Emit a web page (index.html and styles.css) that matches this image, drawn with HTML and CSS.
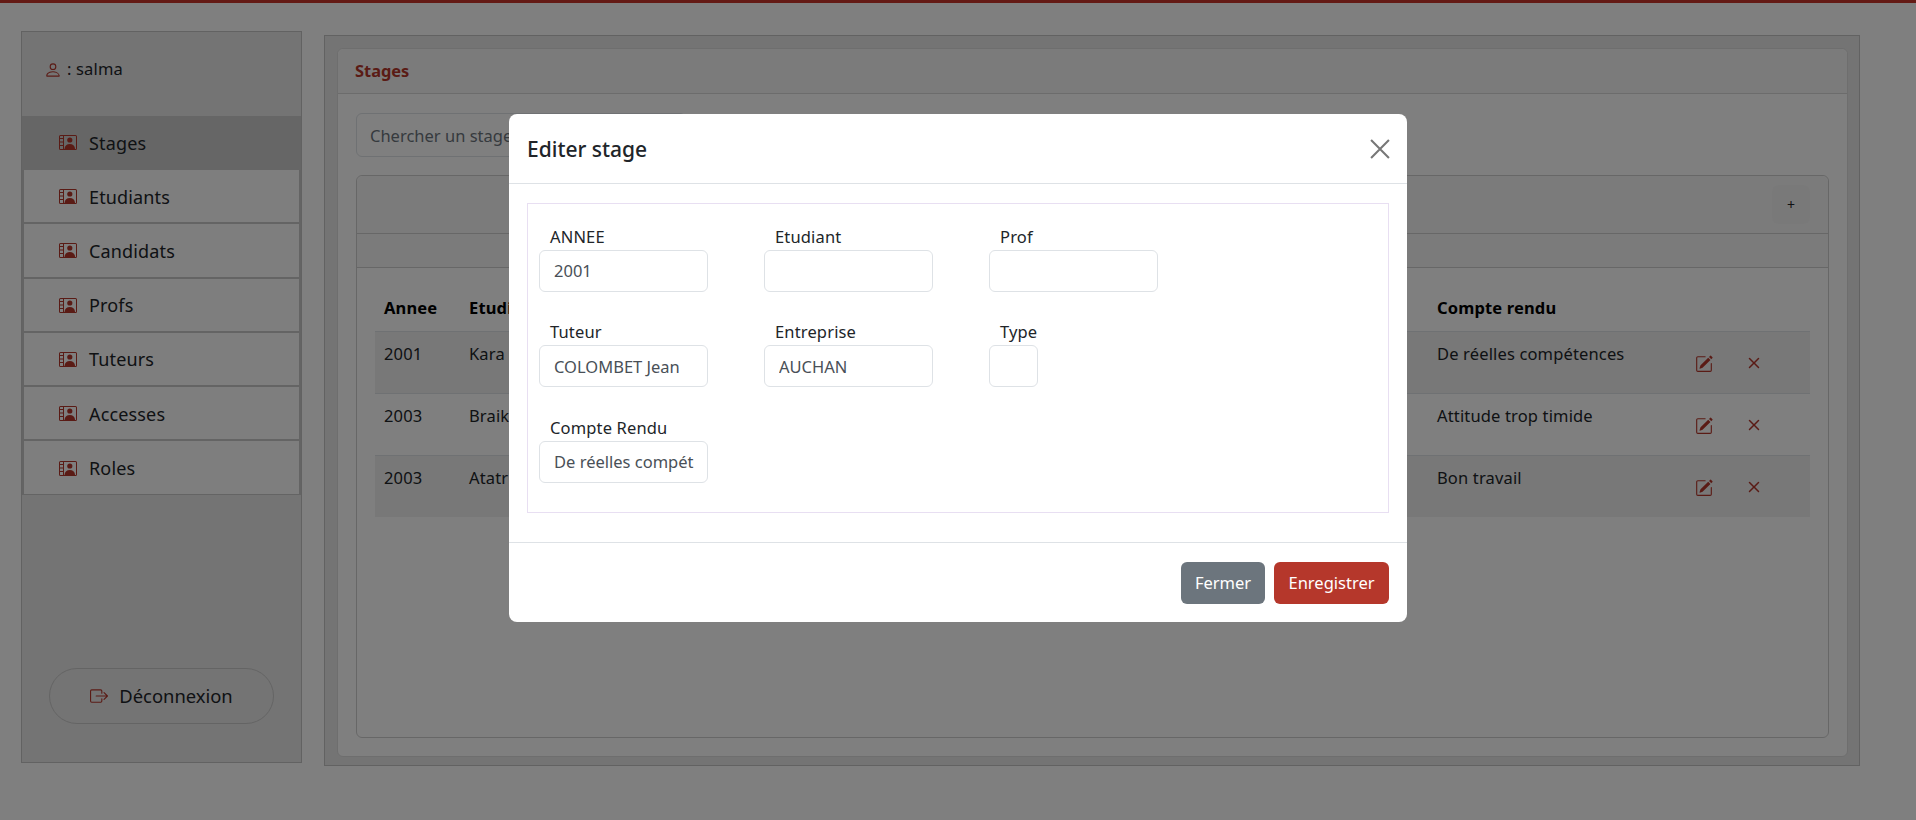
FILE: index.html
```html
<!DOCTYPE html>
<html lang="fr">
<head>
    <meta charset="UTF-8">
    <title>Stages</title>
    <link rel="stylesheet" href="styles.css">
</head>
<body>
    <svg class="sprites" xmlns="http://www.w3.org/2000/svg">
        <symbol id="rolodex" viewBox="0 0 18 15">
            <path fill-rule="evenodd" d="M1.5 0h15A1.5 1.5 0 0 1 18 1.5v12a1.500 1.500 0 0 1-1.500 1.500h-15A1.500 1.500 0 0 1 0 13.500v-12A1.500 1.500 0 0 1 1.500 0zm0 1a.5.5 0 0 0-.5.5V3h3V1zM1 4v2.500h3V4zm0 3.500V10h3V7.500zM1 11v2.500a.5.5 0 0 0 .5.5H4v-3zM5 1v13h11.500a.5.5 0 0 0 .5-.5v-12a.5.5 0 0 0-.5-.5z"/>
            <circle cx="10.800" cy="5" r="2.600"/>
            <path d="M5.500 14c.2-3.200 2.400-5 5.300-5s5.100 1.800 5.300 5z"/>
        </symbol>
        <symbol id="edit" viewBox="0 0 16 16">
            <path d="M15.502 1.94a.5.5 0 0 1 0 .706L14.459 3.69l-2-2L13.502.646a.5.5 0 0 1 .707 0l1.293 1.293zm-1.750 2.456-2-2L4.939 9.21a.5.5 0 0 0-.121.196l-.805 2.414a.25.25 0 0 0 .316.316l2.414-.805a.5.5 0 0 0 .196-.12l6.813-6.814z"/>
            <path fill-rule="evenodd" d="M1 13.500A1.500 1.500 0 0 0 2.500 15h11a1.500 1.500 0 0 0 1.500-1.500v-6a.5.5 0 0 0-1 0v6a.5.5 0 0 1-.5.5h-11a.5.5 0 0 1-.5-.5v-11a.5.5 0 0 1 .5-.5H9a.5.5 0 0 0 0-1H2.500A1.500 1.500 0 0 0 1 2.500v11z"/>
        </symbol>
        <symbol id="cross" viewBox="0 0 16 16">
            <path d="M4.646 4.646a.5.5 0 0 1 .708 0L8 7.293l2.646-2.647a.5.5 0 0 1 .708.708L8.707 8l2.647 2.646a.5.5 0 0 1-.708.708L8 8.707l-2.646 2.647a.5.5 0 0 1-.708-.708L7.293 8 4.646 5.354a.5.5 0 0 1 0-.708z"/>
        </symbol>
    </svg>

    <div class="topbar"></div>

    <div class="layout">
        <aside class="sidebar">
            <div class="user">
                <svg class="icon user-icon" viewBox="0 0 16 16"><path d="M8 8a3 3 0 1 0 0-6 3 3 0 0 0 0 6Zm2-3a2 2 0 1 1-4 0 2 2 0 0 1 4 0Zm4 8c0 1-1 1-1 1H3s-1 0-1-1 1-4 6-4 6 4 6 4Zm-1-.004c-.001-.246-.154-.986-.832-1.664C11.516 10.680 10.289 10 8 10c-2.290 0-3.516.680-4.168 1.332-.678.678-.83 1.418-.832 1.664h10Z"/></svg>
                <span>: salma</span>
            </div>
            <nav class="menu">
                <a class="menu-item active"><svg class="icon menu-icon"><use href="#rolodex"/></svg>Stages</a>
                <a class="menu-item"><svg class="icon menu-icon"><use href="#rolodex"/></svg>Etudiants</a>
                <a class="menu-item"><svg class="icon menu-icon"><use href="#rolodex"/></svg>Candidats</a>
                <a class="menu-item"><svg class="icon menu-icon"><use href="#rolodex"/></svg>Profs</a>
                <a class="menu-item"><svg class="icon menu-icon"><use href="#rolodex"/></svg>Tuteurs</a>
                <a class="menu-item"><svg class="icon menu-icon"><use href="#rolodex"/></svg>Accesses</a>
                <a class="menu-item"><svg class="icon menu-icon"><use href="#rolodex"/></svg>Roles</a>
            </nav>
            <button class="logout">
                <svg class="icon logout-icon" viewBox="0 0 16 16"><path fill-rule="evenodd" d="M10 12.500a.5.5 0 0 1-.5.5h-8a.5.5 0 0 1-.5-.5v-9a.5.5 0 0 1 .5-.5h8a.5.5 0 0 1 .5.5v2a.5.5 0 0 0 1 0v-2A1.500 1.500 0 0 0 9.500 2h-8A1.500 1.500 0 0 0 0 3.500v9A1.500 1.500 0 0 0 1.500 14h8a1.500 1.500 0 0 0 1.500-1.500v-2a.5.5 0 0 0-1 0v2z"/><path fill-rule="evenodd" d="M15.854 8.354a.5.5 0 0 0 0-.708l-3-3a.5.5 0 0 0-.708.708L14.293 7.500H5.500a.5.5 0 0 0 0 1h8.793l-2.147 2.146a.5.5 0 0 0 .708.708l3-3z"/></svg>
                Déconnexion
            </button>
        </aside>

        <main class="panel">
            <section class="card">
                <div class="card-title">Stages</div>
                <div class="card-body">
                    <input class="search" type="text" placeholder="Chercher un stage">
                    <div class="list-card">
                        <div class="list-head"><button class="add">+</button></div>
                        <div class="list-sub"></div>
                        <div class="list-body">
                            <table class="stages">
                                <thead>
                                    <tr>
                                        <th class="col-year">Annee</th>
                                        <th class="col-text">Etudiant</th>
                                        <th class="col-report">Compte rendu</th>
                                        <th class="col-actions"></th>
                                    </tr>
                                </thead>
                                <tbody>
                                    <tr>
                                        <td>2001</td>
                                        <td>Kara</td>
                                        <td>De réelles compétences</td>
                                        <td class="actions"><svg class="icon edit"><use href="#edit"/></svg><svg class="icon cross"><use href="#cross"/></svg></td>
                                    </tr>
                                    <tr>
                                        <td>2003</td>
                                        <td>Braik</td>
                                        <td>Attitude trop timide</td>
                                        <td class="actions"><svg class="icon edit"><use href="#edit"/></svg><svg class="icon cross"><use href="#cross"/></svg></td>
                                    </tr>
                                    <tr>
                                        <td>2003</td>
                                        <td>Atatr</td>
                                        <td>Bon travail</td>
                                        <td class="actions"><svg class="icon edit"><use href="#edit"/></svg><svg class="icon cross"><use href="#cross"/></svg></td>
                                    </tr>
                                </tbody>
                            </table>
                        </div>
                    </div>
                </div>
            </section>
        </main>
    </div>

    <div class="backdrop">
        <div class="modal">
            <div class="modal-header">
                <h5>Editer stage</h5>
                <svg class="close" viewBox="0 0 16 16"><path d="M1.500 1.500l13 13M14.500 1.500l-13 13"/></svg>
            </div>
            <div class="modal-body">
                <form class="edit-form">
                    <div class="field"><label>ANNEE</label><input type="text" value="2001"></div>
                    <div class="field"><label>Etudiant</label><input type="text"></div>
                    <div class="field"><label>Prof</label><input type="text"></div>
                    <div class="field"><label>Tuteur</label><input type="text" value="COLOMBET Jean"></div>
                    <div class="field"><label>Entreprise</label><input type="text" value="AUCHAN"></div>
                    <div class="field"><label>Type</label><input class="short" type="text"></div>
                    <div class="field"><label>Compte Rendu</label><input type="text" value="De réelles compétences"></div>
                </form>
            </div>
            <div class="modal-footer">
                <button class="btn btn-grey">Fermer</button>
                <button class="btn btn-red">Enregistrer</button>
            </div>
        </div>
    </div>
</body>
</html>
```
FILE: styles.css
```css
* {
    box-sizing: border-box;
}
body {
    margin: 0;
    height: 820px;
    overflow: hidden;
    background: #fff;
    color: #212529;
    font-family: "Noto Sans", "Open Sans", sans-serif;
    font-size: 16.5px;
    letter-spacing: 0.15px;
    line-height: 24px;
}
.sprites {
    display: none;
}
.icon {
    fill: #b5372b;
    flex: none;
}
.topbar {
    height: 3px;
    background: #c9352b;
}
.layout {
    display: flex;
    align-items: flex-start;
    padding: 28px 0 0 21px;
}

/* sidebar */
.sidebar {
    width: 281px;
    height: 732px;
    background: #e8e8e8;
    border: 1px solid #c4c4c4;
    display: flex;
    flex-direction: column;
}
.user {
    height: 84px;
    padding: 25px 0 0 22px;
    display: flex;
    align-items: flex-start;
    gap: 5px;
}
.user-icon {
    width: 18px;
    height: 18px;
    margin-top: 4px;
}
.menu-item {
    display: flex;
    align-items: center;
    height: 54.200px;
    padding: 1px 0 0 35px;
    gap: 12px;
    background: #fcfcfc;
    border: 2px solid #c8c8c8;
    border-top: 0;
    font-size: 18px;
}
.menu-item:last-child {
    border-bottom-width: 1px;
}
.menu-item.active {
    background: #cdcdcd;
    border-color: #cdcdcd;
}
.menu-icon {
    width: 18px;
    height: 15px;
}
.logout {
    margin: auto 27px 38px;
    height: 56px;
    border: 1px solid #c9c9c9;
    border-radius: 28px;
    background: transparent;
    color: #212529;
    font: inherit;
    font-size: 18.400px;
    display: flex;
    align-items: center;
    justify-content: center;
    gap: 11px;
}
.logout-icon {
    width: 18px;
    height: 18px;
}

/* main panel */
.panel {
    width: 1536px;
    height: 731px;
    margin: 4px 0 0 22px;
    padding: 12px 11px 8px 12px;
    background: #e8e8e8;
    border: 1px solid #c4c4c4;
}
.card {
    height: 100%;
    background: #fff;
    border: 1px solid #dcdcdc;
    border-radius: 6px;
    display: flex;
    flex-direction: column;
}
.card-title {
    height: 45px;
    padding: 10px 18px 10px 17px;
    background: #f7f7f7;
    border-bottom: 1px solid #d8d8d8;
    border-radius: 6px 6px 0 0;
    color: #b5372b;
    font-weight: 700;
    font-size: 16.400px;
    letter-spacing: 0;
}
.card-body {
    flex: 1;
    padding: 19px 18px 18px;
    display: flex;
    flex-direction: column;
}
.search {
    width: 330px;
    height: 44px;
    padding: 0 13px;
    border: 1px solid #dee2e6;
    border-radius: 6px;
    font: inherit;
}
.search::placeholder {
    color: #6c757d;
}
.list-card {
    flex: 1;
    margin-top: 18px;
    border: 1px solid #cfcfcf;
    border-radius: 6px;
    display: flex;
    flex-direction: column;
}
.list-head {
    height: 58px;
    padding: 9px 18px 0 0;
    background: #f7f7f7;
    border-bottom: 1px solid #cfcfcf;
    border-radius: 6px 6px 0 0;
    display: flex;
    justify-content: flex-end;
}
.add {
    width: 38px;
    height: 39px;
    border: 0;
    border-radius: 6px;
    background: #f3f3f3;
    color: #212529;
    font: inherit;
    font-size: 14px;
}
.list-sub {
    height: 34px;
    background: #f7f7f7;
    border-bottom: 1px solid #cfcfcf;
}
.list-body {
    padding: 20px 18px 0;
}
.stages {
    width: 100%;
    table-layout: fixed;
    border-collapse: collapse;
}
.stages th {
    height: 43px;
    padding: 0 9px 2px;
    text-align: left;
    color: #000;
}
.stages td {
    height: 62px;
    padding: 10px 9px 0;
    vertical-align: top;
    border-top: 1px solid #dee2e6;
    color: #212529;
}
.stages tbody tr:nth-child(odd) {
    background: #f0f0f0;
}
.col-year {
    width: 85px;
}
.col-report {
    width: 252px;
}
.col-actions {
    width: 130px;
}
.stages .actions {
    padding: 23px 0 0 0;
}
.actions svg {
    vertical-align: top;
}
.edit {
    width: 18px;
    height: 18px;
    margin: 0 0 0 15px;
}
.cross {
    width: 24px;
    height: 24px;
    margin: -4px 0 0 29px;
}

/* modal */
.backdrop {
    position: fixed;
    top: 0;
    left: 0;
    width: 100%;
    height: 100%;
    background: rgba(0, 0, 0, 0.5);
    display: flex;
    justify-content: center;
    align-items: flex-start;
    padding-top: 114px;
}
.modal {
    width: 898px;
    height: 508px;
    background: #fff;
    border-radius: 8px;
    color: #212529;
    display: flex;
    flex-direction: column;
}
.modal-header {
    height: 70px;
    padding: 0 16px 0 18px;
    border-bottom: 1px solid #dee2e6;
    display: flex;
    align-items: center;
    justify-content: space-between;
}
.modal-header h5 {
    margin: 0;
    font-size: 21px;
    font-weight: 500;
    letter-spacing: 0;
}
.close {
    width: 22px;
    height: 22px;
    fill: none;
    stroke: #777;
    stroke-width: 1.500;
}
.modal-body {
    flex: 1;
    padding: 19px 18px 0 18px;
    border-bottom: 1px solid #dee2e6;
}
.edit-form {
    height: 310px;
    padding: 20.900px 10px 0 11px;
    border: 1px solid #e8dff2;
    display: grid;
    grid-template-columns: repeat(3, 169px) 1fr;
    grid-auto-rows: 95.500px;
    column-gap: 56px;
    align-content: start;
}
.field:nth-child(3n+1) {
    grid-column: 1;
}
.field label {
    display: block;
    padding-left: 11px;
    height: 25px;
    line-height: 24px;
}
.field input {
    display: block;
    width: 100%;
    height: 42px;
    padding: 0 13px 0 14px;
    border: 1px solid #dee2e6;
    border-radius: 6px;
    background: #fff;
    color: #495057;
    font: inherit;
}
.field input.short {
    width: 49px;
}
.modal-footer {
    height: 79px;
    padding: 19px 18px 0 0;
    display: flex;
    justify-content: flex-end;
    gap: 9px;
}
.btn {
    height: 42px;
    border: 0;
    border-radius: 6px;
    color: #fff;
    font: inherit;
}
.btn-grey {
    width: 84px;
    background: #6c757d;
}
.btn-red {
    width: 115px;
    background: #b5372b;
}
```
